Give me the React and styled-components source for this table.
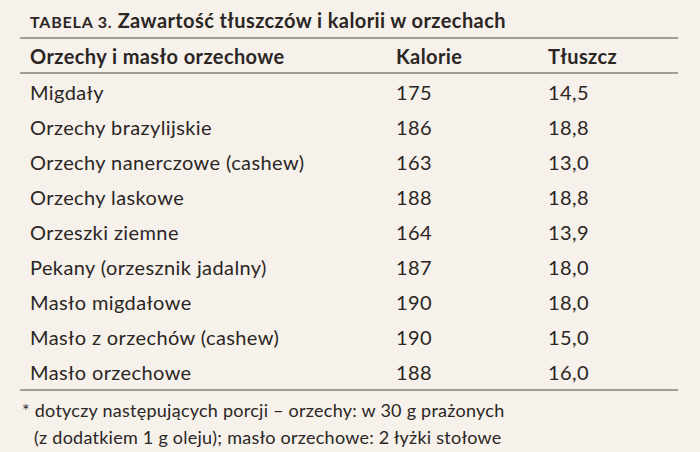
import React from 'react'
import styled, { createGlobalStyle } from 'styled-components'

const GlobalStyle = createGlobalStyle`
  html, body {
    margin: 0;
    padding: 0;
    background: #f6f1eb;
  }
  body {
    font-family: Lato, "Open Sans", sans-serif;
    color: #2b2624;
  }
`

const Page = styled.div`
  width: 700px;
  height: 452px;
  padding: 8px 22px 0 20px;
  box-sizing: border-box;
`

const Caption = styled.div`
  height: 29px;
  border-bottom: 2px solid #a19d98;
  padding-left: 10px;
  font-size: 20px;
  font-weight: 700;
  line-height: 24px;
  letter-spacing: 0.4px;
`

const Label = styled.span`
  font-size: 16px;
  letter-spacing: 0.8px;
`

const Row = styled.div`
  display: grid;
  grid-template-columns: 366px 152px 1fr;
  align-items: center;
  height: ${(p) => (p.$head ? 33 : 35)}px;
  padding-left: 10px;
  font-size: 20px;
  letter-spacing: 0.4px;
  font-weight: ${(p) => (p.$head ? 700 : 400)};
  border-bottom: ${(p) => (p.$head || p.$last ? '2px solid #a19d98' : 'none')};
  box-sizing: content-box;
`

const Note = styled.div`
  padding: 6px 0 0 2px;
  font-size: 18px;
  letter-spacing: 0.25px;
  line-height: 27px;
`

const NoteLine = styled.div`
  padding-left: ${(p) => p.$indent || 0}px;
`

const rows = [
  ['Migdały', '175', '14,5'],
  ['Orzechy brazylijskie', '186', '18,8'],
  ['Orzechy nanerczowe (cashew)', '163', '13,0'],
  ['Orzechy laskowe', '188', '18,8'],
  ['Orzeszki ziemne', '164', '13,9'],
  ['Pekany (orzesznik jadalny)', '187', '18,0'],
  ['Masło migdałowe', '190', '18,0'],
  ['Masło z orzechów (cashew)', '190', '15,0'],
  ['Masło orzechowe', '188', '16,0'],
]

export default function App() {
  return (
    <Page>
      <GlobalStyle />
      <Caption>
        <Label>TABELA 3.</Label> Zawartość tłuszczów i kalorii w orzechach
      </Caption>
      <Row $head>
        <span>Orzechy i masło orzechowe</span>
        <span>Kalorie</span>
        <span>Tłuszcz</span>
      </Row>
      {rows.map((r, i) => (
        <Row key={r[0]} $last={i === rows.length - 1}>
          <span>{r[0]}</span>
          <span>{r[1]}</span>
          <span>{r[2]}</span>
        </Row>
      ))}
      <Note>
        <NoteLine>* dotyczy następujących porcji – orzechy: w 30 g prażonych</NoteLine>
        <NoteLine $indent={12}>(z dodatkiem 1 g oleju); masło orzechowe: 2 łyżki stołowe</NoteLine>
      </Note>
    </Page>
  )
}
